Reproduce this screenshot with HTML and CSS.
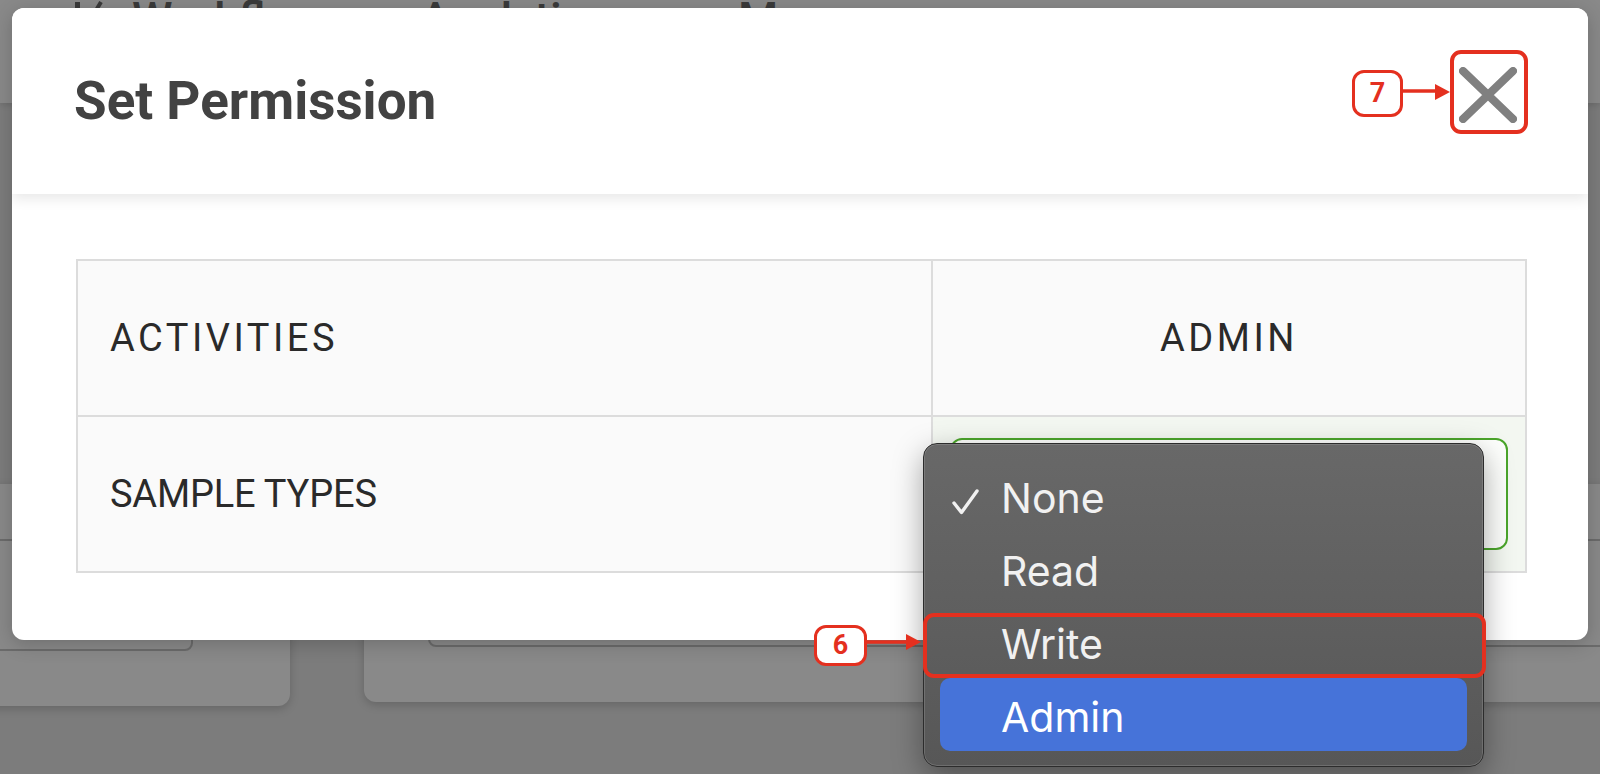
FILE: index.html
```html
<!DOCTYPE html>
<html lang="en">
<head>
<meta charset="utf-8">
<title>Set Permission</title>
<link rel="stylesheet" href="styles.css">
</head>
<body>
<div class="app">
  <header class="topnav">
    <nav class="nav-row">
      <span class="nav-logo">
        <svg width="30" height="36" viewBox="0 0 30 36"><rect x="0" y="1" width="5" height="35" fill="#3a3a3a"/><path d="M20 11 L26 1" stroke="#3a3a3a" stroke-width="4"/></svg>
      </span>
      <span class="nav-item">Workflows</span>
      <span class="nav-item">Analytics</span>
      <span class="nav-item">Manage</span>
    </nav>
  </header>
  <main class="app-main">
    <section class="bg-card bg-card-a"><div class="bg-field"></div></section>
    <section class="bg-card bg-card-b"><div class="bg-field"></div></section>
  </main>
</div>

<div class="modal" role="dialog" aria-label="Set Permission">
  <div class="modal-header">
    <h2 class="modal-title">Set Permission</h2>
    <button class="modal-close" aria-label="Close">
      <svg width="58" height="56" viewBox="0 0 58 56"><path d="M4 4 L54 52 M54 4 L4 52" stroke="#808080" stroke-width="8" stroke-linecap="round" fill="none"/></svg>
    </button>
  </div>
  <div class="modal-body">
    <table class="perm-table">
      <colgroup><col class="col-a"><col class="col-b"></colgroup>
      <thead>
        <tr><th class="th-activity">ACTIVITIES</th><th class="th-role">ADMIN</th></tr>
      </thead>
      <tbody>
        <tr><td class="td-activity">SAMPLE TYPES</td><td class="td-select"><div class="select-box"></div></td></tr>
      </tbody>
    </table>
  </div>
</div>

<ul class="menu">
  <li class="menu-item is-checked">
    <svg class="menu-check" width="28" height="26" viewBox="0 0 28 26"><path d="M2 14 L9.5 23.5 L25 2" stroke="#f1f1f1" stroke-width="3.4" fill="none" stroke-linecap="round" stroke-linejoin="round"/></svg>
    None
  </li>
  <li class="menu-item">Read</li>
  <li class="menu-item">Write</li>
  <li class="menu-item is-active">Admin</li>
</ul>

<div class="mark-box mark-write"></div>
<div class="mark-box mark-close"></div>
<div class="badge badge-6">6</div>
<svg class="arrow arrow-6" width="55" height="16" viewBox="0 0 55 16"><path d="M0 8 H41" stroke="#e4301f" stroke-width="3.5"/><path d="M40 0 L55 8 L40 16 Z" fill="#e4301f"/></svg>
<div class="badge badge-7">7</div>
<svg class="arrow arrow-7" width="47" height="16" viewBox="0 0 47 16"><path d="M0 7 H33" stroke="#e4301f" stroke-width="3.5"/><path d="M32 0 L47 8 L32 16 Z" fill="#e4301f"/></svg>
</body>
</html>
```

FILE: styles.css
```css
html, body {
  margin: 0;
  padding: 0;
}
body {
  width: 1600px;
  height: 774px;
  overflow: hidden;
  position: relative;
  background: #7d7d7d;
  font-family: Roboto, "Liberation Sans", Arial, sans-serif;
}

/* dimmed background app */
.app {
  width: 1600px;
  height: 774px;
  background: #7c7c7c;
}
.topnav {
  height: 103px;
  background: #898989;
  box-shadow: 0 2px 6px rgba(0,0,0,0.12);
}
.nav-row {
  display: grid;
  grid-template-columns: 57px 288px 318px auto;
  padding-left: 75px;
  padding-top: 1px;
  font: 500 46px/36px Roboto, sans-serif;
  color: #3a3a3a;
  align-items: start;
}
.nav-logo svg { display: block; }
.app-main {
  display: flex;
  gap: 74px;
  padding-top: 381px;
  margin-left: -20px;
}
.bg-card {
  background: #898989;
  border-radius: 12px;
  box-shadow: 0 3px 10px rgba(0,0,0,0.18);
  flex: none;
}
.bg-card-a {
  width: 310px;
  height: 222px;
}
.bg-card-b {
  width: 1300px;
  height: 218px;
}
.bg-field {
  height: 112px;
  border: 2px solid #6b6b6b;
  border-radius: 8px;
  box-sizing: border-box;
  margin-top: 55px;
}
.bg-card-a .bg-field {
  margin-left: 0;
  width: 213px;
}
.bg-card-b .bg-field {
  margin-left: 64px;
  height: 108px;
  width: 1200px;
}

/* modal */
.modal {
  position: absolute;
  z-index: 1;
  left: 12px;
  top: 8px;
  width: 1576px;
  height: 632px;
  background: #fff;
  border-radius: 12px;
  overflow: hidden;
  box-shadow: 0 4px 20px rgba(0,0,0,0.2);
}
.modal-header {
  height: 186px;
  display: flex;
  align-items: center;
  justify-content: space-between;
  padding: 0 71px 0 62px;
  box-shadow: 0 5px 12px rgba(0,0,0,0.09);
  position: relative;
  z-index: 1;
  background: #fff;
}
.modal-title {
  margin: 0;
  font: 700 53px/1 Roboto, sans-serif;
  color: #424242;
}
.modal-close {
  border: 0;
  background: none;
  padding: 0;
  margin-bottom: 12px;
  cursor: pointer;
}
.modal-close svg { display: block; }
.modal-body {
  padding: 65px 63px 0 64px;
}
.perm-table {
  width: 1449px;
  table-layout: fixed;
  border-collapse: collapse;
  border: 2px solid #dcdcdc;
}
.col-a { width: 855px; }
.col-b { width: 594px; }
.perm-table th,
.perm-table td {
  border: 2px solid #dcdcdc;
  height: 154px;
  padding: 0;
  background: #fafafa;
}
.perm-table th {
  font: 400 38px Roboto, sans-serif;
  letter-spacing: 3.5px;
  color: #2a2a2a;
}
.th-activity {
  text-align: left;
  padding-left: 32px !important;
}
.th-role {
  text-align: center;
}
.td-activity {
  font: 400 38px Roboto, sans-serif;
  letter-spacing: -0.2px;
  color: #2a2a2a;
  padding-left: 32px !important;
}
.perm-table td.td-select {
  background: #f3f7f1;
  padding: 0 17px !important;
}
.select-box {
  height: 112px;
  box-sizing: border-box;
  border: 2px solid #4ba52b;
  border-radius: 12px;
  background: #fdfefc;
}

/* native select popup */
.menu {
  position: absolute;
  z-index: 2;
  left: 923px;
  top: 443px;
  width: 561px;
  height: 324px;
  box-sizing: border-box;
  margin: 0;
  padding: 15px 16px;
  list-style: none;
  border-radius: 14px;
  border: 1px solid #2c2c2c;
  background: linear-gradient(#686868, #575757);
  box-shadow: inset 0 0 0 1px rgba(255,255,255,0.14), 0 10px 30px rgba(0,0,0,0.35);
}
.menu-item {
  position: relative;
  height: 73px;
  box-sizing: border-box;
  display: flex;
  align-items: center;
  padding: 5px 0 0 61px;
  font: 400 41px Inter, "Noto Sans", sans-serif;
  color: #f1f1f1;
  border-radius: 10px;
}
.menu-check {
  position: absolute;
  left: 12px;
  top: 30px;
}
.menu-item.is-active {
  background: #4673d9;
  color: #fff;
}

/* annotations */
.mark-box,
.badge,
.arrow {
  z-index: 3;
}
.mark-box {
  position: absolute;
  box-sizing: border-box;
  border: 4px solid #e4301f;
  border-radius: 11px;
}
.mark-write {
  left: 923px;
  top: 613px;
  width: 563px;
  height: 65px;
}
.mark-close {
  left: 1450px;
  top: 50px;
  width: 78px;
  height: 84px;
}
.badge {
  position: absolute;
  box-sizing: border-box;
  border: 3.5px solid #e4301f;
  border-radius: 12px;
  background: #fff;
  color: #e4301f;
  font: 700 27px/1 Roboto, sans-serif;
  display: flex;
  align-items: center;
  justify-content: center;
}
.badge-6 {
  left: 814px;
  top: 625px;
  width: 53px;
  height: 41px;
}
.badge-7 {
  left: 1352px;
  top: 70px;
  width: 51px;
  height: 47px;
}
.arrow {
  position: absolute;
  display: block;
}
.arrow-6 {
  left: 866px;
  top: 634px;
}
.arrow-7 {
  left: 1403px;
  top: 84px;
}
```
